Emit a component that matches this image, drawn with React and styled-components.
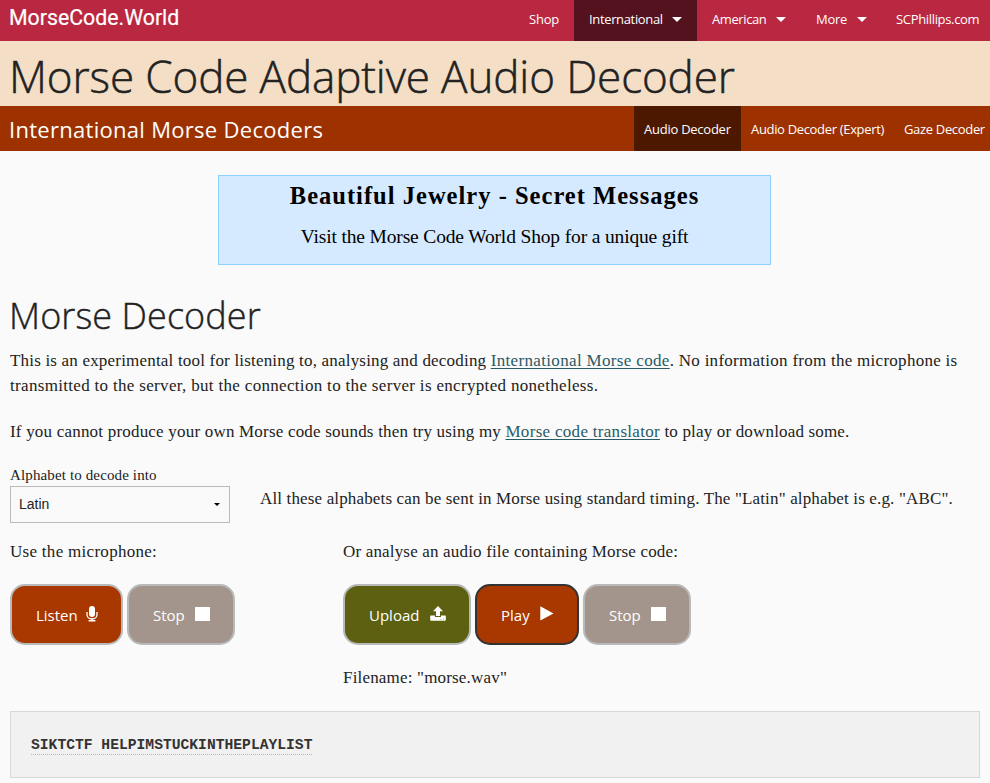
import React from 'react';
import styled, { createGlobalStyle } from 'styled-components';

const sans = '"Open Sans", "Noto Sans", sans-serif';
const serif = '"Liberation Serif", serif';

const Global = createGlobalStyle`
  * { box-sizing: border-box; }
  body { margin: 0; background: #fafafa; color: #222; font-family: ${serif}; overflow: hidden; }
`;

const Page = styled.div`
  width: 990px;
  height: 783px;
  overflow: hidden;
`;
const TopBar = styled.header`
  display: flex;
  justify-content: space-between;
  height: 41px;
  background: #ba2740;
`;
const Logo = styled.div`
  padding-left: 9px;
  font: 400 21.3px/36px Roboto, sans-serif;
  -webkit-text-stroke: 0.2px #fff;
  color: #fff;
`;
const Nav = styled.nav`
  display: flex;
`;
const NavItem = styled.a`
  display: flex;
  align-items: center;
  justify-content: space-between;
  width: ${(p) => p.$w}px;
  padding: 0 ${(p) => p.$pad}px;
  padding-bottom: ${(p) => p.$lift || 0}px;
  background: ${(p) => p.$bg || 'transparent'};
  color: #fff;
  font: 400 13px ${sans};
  letter-spacing: ${(p) => p.$ls}px;
  white-space: nowrap;
`;
const Caret = styled.span`
  border: 5px solid transparent;
  border-top-color: #fff;
  border-bottom: 0;
`;
const TitleBand = styled.div`
  height: 65px;
  padding-left: 9px;
  background: #f5dec6;
`;
const Title = styled.h1`
  margin: 0;
  font: 300 44px/70px ${sans};
  letter-spacing: -0.12px;
  -webkit-text-stroke: 0.5px #222;
  white-space: nowrap;
`;
const SubBar = styled.div`
  display: flex;
  justify-content: space-between;
  height: 45px;
  background: #9d3200;
`;
const SubTitle = styled.div`
  padding-left: 9px;
  color: #fff;
  font: 400 22px/46px ${sans};
  letter-spacing: 0.29px;
`;
const Main = styled.main`
  padding: 24px 10px 0;
`;
const Promo = styled.aside`
  width: 553px;
  height: 90px;
  margin: 0 auto 0 208px;
  border: 1px solid #8fd0fb;
  background: #d6eaff;
  color: #000;
  text-align: center;
  white-space: nowrap;
`;
const PromoTitle = styled.div`
  font: 700 24.5px/40px ${serif};
  letter-spacing: 1.02px;
`;
const PromoText = styled.div`
  font: 400 19.5px/42px ${serif};
  letter-spacing: -0.15px;
`;
const Heading = styled.h2`
  margin: 25px 0 0 -1px;
  font: 300 36px/51px ${sans};
  letter-spacing: 0.08px;
  -webkit-text-stroke: 0.4px #222;
`;
const Paragraph = styled.p`
  margin: 7px 0 0;
  font-size: 17px;
  line-height: 25px;
  white-space: nowrap;
  & + & { margin-top: 21px; }
`;
const Run = styled.span`
  letter-spacing: ${(p) => p.$ls}px;
`;
const Link = styled.a`
  color: #2a5a66;
  letter-spacing: ${(p) => p.$ls}px;
  text-decoration: underline;
  text-underline-offset: 2px;
`;
const AlphabetRow = styled.div`
  display: grid;
  grid-template-columns: 220px 1fr;
  column-gap: 30px;
  margin-top: 21px;
`;
const Label = styled.div`
  font-size: 15px;
  line-height: 21px;
  letter-spacing: 0.13px;
`;
const Select = styled.div`
  display: flex;
  align-items: center;
  justify-content: space-between;
  height: 37px;
  padding: 0 9px 2px 8px;
  border: 1px solid #bababa;
  font: 14px "Liberation Sans", sans-serif;
`;
const SelectArrow = styled.span`
  border: 3px solid transparent;
  border-top-color: #000;
  border-bottom: 0;
  margin-top: 2px;
`;
const Hint = styled.div`
  margin-top: 21px;
  font-size: 17px;
  line-height: 25px;
  letter-spacing: 0.15px;
  white-space: nowrap;
`;
const Sources = styled.div`
  display: grid;
  grid-template-columns: 333px 1fr;
  margin-top: 16px;
  height: 172px;
`;
const Caption = styled.div`
  font-size: 17px;
  line-height: 25px;
  letter-spacing: ${(p) => p.$ls}px;
`;
const Buttons = styled.div`
  display: flex;
  gap: 4px;
  margin: 20px 0;
`;
const Button = styled.button`
  display: flex;
  align-items: center;
  justify-content: space-between;
  width: ${(p) => p.$w}px;
  height: 61px;
  padding: 0 23px 0 24px;
  border: 2px solid ${(p) => p.$border || '#b9b9b9'};
  border-radius: 15px;
  background: ${(p) => p.$bg};
  color: #fff;
  font: 400 15px ${sans};
  svg { display: block; margin-top: -2px; fill: #fff; }
`;
const Output = styled.div`
  height: 67px;
  padding: 23px 20px 0;
  border: 1px solid #d8d8d8;
  background: #f1f1f1;
`;
const Decoded = styled.span`
  display: inline-block;
  height: 20px;
  border-bottom: 1px dotted #bbb;
  color: #333;
  font: 700 14.67px/21px "Liberation Mono", monospace;
`;

const Mic = () => (
  <svg width="12" height="16" viewBox="0 0 12 16">
    <rect x="3" y="0" width="6" height="11" rx="3" />
    <path d="M1 6v2.5a5 4.5 0 0 0 10 0V6" fill="none" stroke="#fff" strokeWidth="1.3" />
    <path d="M5.2 12.5h1.6v1.4h2.6v1.5H2.6v-1.5h2.6z" />
  </svg>
);
const UploadIcon = () => (
  <svg width="16" height="15" viewBox="0 0 16 15">
    <path d="M8 0l5 5.2H10V10H6V5.2H3z" />
    <path d="M0.7 9.5H5V11h6V9.5h4.3l.5.6V14l-.5.7H.7L.2 14v-3.9z" />
    <path d="M10.5 12.7h.8v.8h-.8zM12.9 12.7h.8v.8h-.8z" fill="#5c6010" />
  </svg>
);
const PlayIcon = () => (
  <svg width="14" height="15" viewBox="0 0 14 15"><path d="M0.3 0.3L13.5 7.4L0.3 14.5z" /></svg>
);
const Square = () => (
  <svg width="15" height="14" viewBox="0 0 15 14"><rect width="15" height="14" /></svg>
);

export default function App() {
  return (
    <Page>
      <Global />
      <TopBar>
        <Logo>MorseCode.World</Logo>
        <Nav>
          <NavItem $w={60} $pad={15} $ls={-0.2} $lift={3}>Shop</NavItem>
          <NavItem $w={123} $pad={15} $ls={-0.35} $lift={3} $bg="#54111e">International<Caret /></NavItem>
          <NavItem $w={104} $pad={15} $ls={-0.4} $lift={3}>American<Caret /></NavItem>
          <NavItem $w={81} $pad={15} $ls={-0.3} $lift={3}>More<Caret /></NavItem>
          <NavItem $w={108} $pad={14} $ls={-0.33} $lift={3}>SCPhillips.com</NavItem>
        </Nav>
      </TopBar>
      <TitleBand><Title>Morse Code Adaptive Audio Decoder</Title></TitleBand>
      <SubBar>
        <SubTitle>International Morse Decoders</SubTitle>
        <Nav>
          <NavItem $w={107} $pad={10} $ls={-0.25} $bg="#4c1800">Audio Decoder</NavItem>
          <NavItem $w={153} $pad={10} $ls={-0.33}>Audio Decoder (Expert)</NavItem>
          <NavItem $w={96} $pad={10} $ls={-0.33}>Gaze Decoder</NavItem>
        </Nav>
      </SubBar>
      <Main>
        <Promo>
          <PromoTitle>Beautiful Jewelry - Secret Messages</PromoTitle>
          <PromoText>Visit the Morse Code World Shop for a unique gift</PromoText>
        </Promo>
        <Heading>Morse Decoder</Heading>
        <Paragraph>
          <Run $ls={0.19}>This is an experimental tool for listening to, analysing and decoding </Run>
          <Link $ls={0.34}>International Morse code</Link>
          <Run $ls={0.27}>. No information from the microphone is</Run>
          <br />
          <Run $ls={0.32}>transmitted to the server, but the connection to the server is encrypted nonetheless.</Run>
        </Paragraph>
        <Paragraph>
          <Run $ls={0.2}>If you cannot produce your own Morse code sounds then try using my </Run>
          <Link $ls={0.3}>Morse code translator</Link>
          <Run $ls={0.17}> to play or download some.</Run>
        </Paragraph>
        <AlphabetRow>
          <div>
            <Label>Alphabet to decode into</Label>
            <Select>Latin<SelectArrow /></Select>
          </div>
          <Hint>All these alphabets can be sent in Morse using standard timing. The "Latin" alphabet is e.g. "ABC".</Hint>
        </AlphabetRow>
        <Sources>
          <div>
            <Caption $ls={0.29}>Use the microphone:</Caption>
            <Buttons>
              <Button $w={113} $bg="#a83700">Listen<Mic /></Button>
              <Button $w={108} $bg="#a3958c">Stop<Square /></Button>
            </Buttons>
          </div>
          <div>
            <Caption $ls={0.17}>Or analyse an audio file containing Morse code:</Caption>
            <Buttons>
              <Button $w={128} $bg="#5c6010">Upload<UploadIcon /></Button>
              <Button $w={104} $bg="#a83700" $border="#333">Play<PlayIcon /></Button>
              <Button $w={108} $bg="#a3958c">Stop<Square /></Button>
            </Buttons>
            <Caption $ls={0.18}>Filename: "morse.wav"</Caption>
          </div>
        </Sources>
        <Output><Decoded>SIKTCTF HELPIMSTUCKINTHEPLAYLIST</Decoded></Output>
      </Main>
    </Page>
  );
}
